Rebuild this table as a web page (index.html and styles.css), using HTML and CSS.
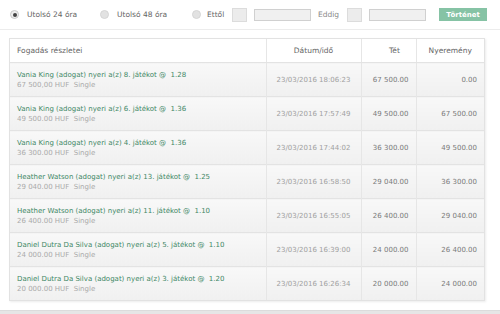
FILE: index.html
```html
<!DOCTYPE html>
<html lang="hu">
<head>
<meta charset="utf-8">
<link rel="stylesheet" href="styles.css">
</head>
<body>
<div class="topbar">
  <label class="opt opt1"><span class="radio checked"></span><span>Utolsó 24 óra</span></label>
  <label class="opt opt2"><span class="radio"></span><span>Utolsó 48 óra</span></label>
  <label class="opt opt3"><span class="radio"></span><span>Ettől</span></label>
  <span class="cal"></span>
  <span class="inp"></span>
  <span class="lbl">Eddig</span>
  <span class="cal"></span>
  <span class="inp"></span>
  <span class="btn">Történet</span>
</div>
<div class="panel">
  <table class="bets">
    <colgroup>
      <col class="c1"><col class="c2"><col class="c3"><col class="c4">
    </colgroup>
    <thead>
      <tr><th class="left">Fogadás részletei</th><th>Dátum/idő</th><th class="th-tet">Tét</th><th>Nyeremény</th></tr>
    </thead>
    <tbody>
      <tr><td class="det"><div class="t">Vania King (adogat) nyeri a(z) 8. játékot @&nbsp; 1.28</div><div class="s">67 500,00 HUF&nbsp; Single</div></td><td class="date">23/03/2016 18:06:23</td><td class="num">67 500.00</td><td class="num">0.00</td></tr>
      <tr><td class="det"><div class="t">Vania King (adogat) nyeri a(z) 6. játékot @&nbsp; 1.36</div><div class="s">49 500.00 HUF&nbsp; Single</div></td><td class="date">23/03/2016 17:57:49</td><td class="num">49 500.00</td><td class="num">67 500.00</td></tr>
      <tr><td class="det"><div class="t">Vania King (adogat) nyeri a(z) 4. játékot @&nbsp; 1.36</div><div class="s">36 300.00 HUF&nbsp; Single</div></td><td class="date">23/03/2016 17:44:02</td><td class="num">36 300.00</td><td class="num">49 500.00</td></tr>
      <tr><td class="det"><div class="t">Heather Watson (adogat) nyeri a(z) 13. játékot @&nbsp; 1.25</div><div class="s">29 040.00 HUF&nbsp; Single</div></td><td class="date">23/03/2016 16:58:50</td><td class="num">29 040.00</td><td class="num">36 300.00</td></tr>
      <tr><td class="det"><div class="t">Heather Watson (adogat) nyeri a(z) 11. játékot @&nbsp; 1.10</div><div class="s">26 400.00 HUF&nbsp; Single</div></td><td class="date">23/03/2016 16:55:05</td><td class="num">26 400.00</td><td class="num">29 040.00</td></tr>
      <tr><td class="det"><div class="t">Daniel Dutra Da Silva (adogat) nyeri a(z) 5. játékot @&nbsp; 1.10</div><div class="s">24 000.00 HUF&nbsp; Single</div></td><td class="date">23/03/2016 16:39:00</td><td class="num">24 000.00</td><td class="num">26 400.00</td></tr>
      <tr><td class="det"><div class="t">Daniel Dutra Da Silva (adogat) nyeri a(z) 3. játékot @&nbsp; 1.20</div><div class="s">20 000.00 HUF&nbsp; Single</div></td><td class="date">23/03/2016 16:26:34</td><td class="num">20 000.00</td><td class="num">24 000.00</td></tr>
    </tbody>
  </table>
</div>
<div class="footer"></div>
</body>
</html>
```
FILE: styles.css
```css
html, body {
  margin: 0;
  padding: 0;
  background: #fff;
}
body {
  font-family: "DejaVu Sans", Verdana, sans-serif;
  color: #555;
  width: 500px;
  height: 314px;
  overflow: hidden;
}
.topbar {
  height: 29px;
  border-bottom: 1px solid #ececec;
  display: flex;
  align-items: center;
  font-size: 7.5px;
  color: #666;
  box-sizing: content-box;
}
.opt {
  display: flex;
  align-items: center;
  gap: 8px;
}
.opt1 { margin-left: 10px; width: 90px; }
.opt2 { width: 92px; }
.opt3 { width: 40px; gap: 6px; }
.radio {
  width: 9px;
  height: 9px;
  border-radius: 50%;
  background: #e2e2e2;
  border: 1px solid #d6d6d6;
  box-sizing: border-box;
  position: relative;
  flex: none;
}
.radio.checked {
  background: #eee;
  border-color: #c8c8c8;
}
.radio.checked::after {
  content: "";
  position: absolute;
  left: 1.5px;
  top: 1.5px;
  width: 4px;
  height: 4px;
  border-radius: 50%;
  background: #444;
}
.cal {
  width: 15px;
  height: 14px;
  background: #ececec;
  border: 1px solid #dcdcdc;
  box-sizing: border-box;
  margin-right: 7px;
  flex: none;
}
.inp {
  width: 57px;
  height: 12px;
  background: #f0f0f0;
  border: 1px solid #d0d0d0;
  box-sizing: border-box;
  flex: none;
}
.lbl {
  margin: 0 8px 0 7px;
  color: #888;
}
.btn {
  margin-left: 13px;
  width: 48px;
  height: 13px;
  background: #86c3a5;
  color: #fff;
  font-weight: bold;
  font-size: 7px;
  display: flex;
  align-items: center;
  justify-content: center;
  flex: none;
}
.panel {
  margin: 8px 0 0 9px;
  width: 476px;
  border: 1px solid #e2e2e2;
  box-shadow: 1px 1px 2px rgba(0,0,0,0.08);
  box-sizing: border-box;
  background: #fff;
}
.bets {
  width: 100%;
  border-collapse: collapse;
  table-layout: fixed;
}
.c1 { width: 256px; }
.c2 { width: 95px; }
.c3 { width: 55px; }
.c4 { width: auto; }
.bets th {
  height: 23px;
  font-weight: normal;
  font-size: 7.5px;
  color: #666;
  text-align: center;
  border-left: 1px solid #e6e6e6;
  border-bottom: 1px solid #e3e3e3;
  padding: 0;
  background: #fff;
}
.bets th.left {
  text-align: left;
  padding-left: 7px;
  border-left: none;
}
.bets th.th-tet {
  padding-left: 12px;
}
.bets td {
  height: 33px;
  padding: 0;
  font-size: 7px;
  border-left: 1px solid #e6e6e6;
  border-top: 1px solid #e3e3e3;
  background: linear-gradient(#f8f8f8, #f0f0f0);
  vertical-align: middle;
}
.bets td.det {
  border-left: none;
  padding-left: 7px;
}
.t {
  color: #3f8866;
  line-height: 10px;
  white-space: nowrap;
}
.s {
  color: #aaa;
  line-height: 10px;
  white-space: nowrap;
}
.date {
  text-align: center;
  color: #a0a0a0;
}
.num {
  text-align: right;
  padding-right: 7px !important;
  color: #7a7a7a;
}
.footer {
  margin-top: 9px;
  height: 6px;
  background: #e6e6e6;
  border-top: 1px solid #dcdcdc;
}
```
